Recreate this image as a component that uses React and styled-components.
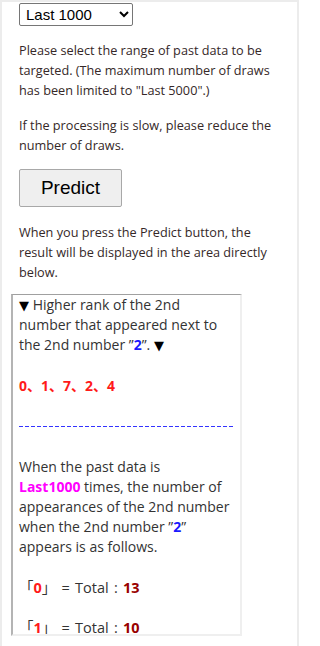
import React from 'react'
import styled, { createGlobalStyle } from 'styled-components'

const GlobalStyle = createGlobalStyle`
  html, body {
    margin: 0;
    padding: 0;
    background: #fff;
  }
`

const Page = styled.div`
  box-sizing: border-box;
  width: 299px;
  min-height: 646px;
  border: 2px solid #ececec;
  border-bottom: none;
  padding: 1px 17px 0 17px;
  font-family: 'Open Sans', 'Noto Sans CJK JP', sans-serif;
  color: #333;
`

const RangeSelect = styled.select`
  display: block;
  box-sizing: border-box;
  width: 114px;
  height: 23px;
  padding: 0 2px;
  font-family: 'Liberation Sans', Arial, sans-serif;
  font-size: 15px;
  color: #000;
  background: #fff;
  border: 1px solid #767676;
  border-radius: 2px;
`

const Note = styled.p`
  margin: ${(p) => p.top || 14}px 0 0 0;
  font-size: 12.7px;
  line-height: 20px;
  color: #352828;
`

const PredictButton = styled.button`
  display: block;
  box-sizing: border-box;
  margin-top: 14px;
  width: 103px;
  height: 38px;
  font-family: 'Liberation Sans', Arial, sans-serif;
  font-size: 19px;
  color: #000;
  background: #efefef;
  border: 1px solid #a8a8a8;
  border-radius: 2px;
`

const ResultBox = styled.div`
  box-sizing: border-box;
  margin: 12px 0 0 -8px;
  width: 231px;
  height: 342px;
  overflow: hidden;
  padding: 0 6px 0 6px;
  border-style: solid;
  border-width: 1px 2px 2px 2px;
  border-color: #a0a0a0 #efefef #efefef #b4b4b4;
  font-size: 14px;
  line-height: 20.2px;
`

const Line = styled.div`
  min-height: 20.2px;
`

const CountLine = styled(Line)`
  word-spacing: 1.5px;
  font-size: 14.5px;
`

const Arrow = styled.span`
  font-family: 'DejaVu Sans', sans-serif;
  font-size: 13px;
  line-height: 1;
  color: #000;
`

const Blue = styled.b`
  color: #1a1aff;
`

const Red = styled.b`
  color: #ff1a1a;
`

const Pink = styled.b`
  color: #ff00ff;
`

const Count = styled.b`
  color: #990000;
`

const Dashes = styled.div`
  height: 20.2px;
  display: flex;
  align-items: center;
  &::before {
    content: '';
    display: block;
    width: 214px;
    height: 1px;
    background: repeating-linear-gradient(to right, #3333ff 0 4px, transparent 4px 6px);
  }
`

const counts = [
  { n: 0, total: 13 },
  { n: 1, total: 10 },
]

export default function App() {
  return (
    <>
      <GlobalStyle />
      <Page>
        <RangeSelect defaultValue="1000">
          <option value="1000">Last 1000</option>
        </RangeSelect>
        <Note>
          Please select the range of past data to be targeted. (The maximum number of draws has been limited to "Last 5000".)
        </Note>
        <Note top={15}>If the processing is slow, please reduce the number of draws.</Note>
        <PredictButton>Predict</PredictButton>
        <Note top={15}>
          When you press the Predict button, the result will be displayed in the area directly below.
        </Note>
        <ResultBox>
          <Line>
            <Arrow>▼</Arrow> Higher rank of the 2nd number that appeared next to the 2nd number ”<Blue>2</Blue>”. <Arrow>▼</Arrow>
          </Line>
          <Line />
          <Line>
            <Red>0、1、7、2、4</Red>
          </Line>
          <Line />
          <Dashes />
          <Line />
          <Line>
            When the past data is
            <br />
            <Pink>Last1000</Pink> times, the number of appearances of the 2nd number when the 2nd number ”<Blue>2</Blue>” appears is as follows.
          </Line>
          {counts.map((c) => (
            <React.Fragment key={c.n}>
              <Line />
              <CountLine>
                「<Red>{c.n}</Red>」 = Total : <Count>{c.total}</Count>
              </CountLine>
            </React.Fragment>
          ))}
        </ResultBox>
      </Page>
    </>
  )
}
